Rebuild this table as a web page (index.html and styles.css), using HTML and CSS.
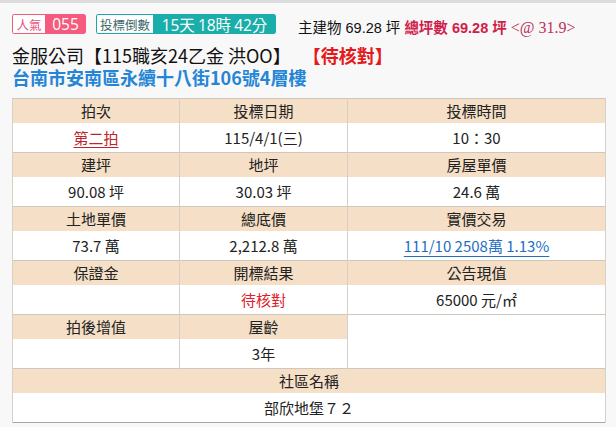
FILE: index.html
```html
<!DOCTYPE html>
<html lang="zh-Hant">
<head>
<meta charset="utf-8">
<link rel="stylesheet" href="styles.css">
</head>
<body>
<div class="topbar"></div>
<div class="page">
  <div class="statline">
    <span class="badge pop"><span class="b-label">人氣</span><span class="b-val">055</span></span>
    <span class="badge cd"><span class="b-label">投標倒數</span><span class="b-val">15天 18時 42分</span></span>
    <span class="area">主建物 69.28 坪 <b class="hl">總坪數 <span class="num">69.28</span> 坪</b> <span class="at">&lt;@ 31.9&gt;</span></span>
  </div>
  <div class="title">金服公司【115職亥24乙金 洪OO】 <span class="status">【待核對】</span></div>
  <div class="addr">台南市安南區永續十八街106號4層樓</div>
  <table class="info">
    <colgroup><col class="c1"><col class="c2"><col class="c3"></colgroup>
    <tr class="hd"><td>拍次</td><td>投標日期</td><td>投標時間</td></tr>
    <tr class="vl"><td><a class="red-link">第二拍</a></td><td>115/4/1(三)</td><td>10：30</td></tr>
    <tr class="hd"><td>建坪</td><td>地坪</td><td>房屋單價</td></tr>
    <tr class="vl"><td>90.08 坪</td><td>30.03 坪</td><td>24.6 萬</td></tr>
    <tr class="hd"><td>土地單價</td><td>總底價</td><td>實價交易</td></tr>
    <tr class="vl"><td>73.7 萬</td><td>2,212.8 萬</td><td><a class="blue-link">111/10 2508萬 1.13%</a></td></tr>
    <tr class="hd"><td>保證金</td><td>開標結果</td><td>公告現值</td></tr>
    <tr class="vl"><td></td><td class="red">待核對</td><td>65000 元/㎡</td></tr>
    <tr class="hd"><td>拍後增值</td><td>屋齡</td><td class="blank" rowspan="2"></td></tr>
    <tr class="vl"><td></td><td>3年</td></tr>
    <tr class="hd"><td colspan="3">社區名稱</td></tr>
    <tr class="vl last"><td colspan="3">部欣地堡７２</td></tr>
  </table>
</div>
</body>
</html>
```
FILE: styles.css
```css
html, body {
  margin: 0;
  padding: 0;
  background: #f8f8f8;
}
body {
  font-family: "Noto Sans CJK TC", "Noto Sans", sans-serif;
  color: #222;
}
.topbar {
  height: 3px;
  background: #dcdcdc;
}
.page {
  padding: 11px 11px 0 12px;
}
.statline {
  display: flex;
  align-items: center;
  height: 20px;
  white-space: nowrap;
}
.badge {
  display: inline-flex;
  height: 20px;
  box-sizing: border-box;
  border-radius: 2px;
  overflow: hidden;
}
.b-label {
  display: flex;
  align-items: center;
  justify-content: center;
  background: #fff;
  box-sizing: border-box;
  font-size: 12.5px;
  border-radius: 2px 0 0 2px;
}
.b-val {
  display: flex;
  align-items: center;
  justify-content: center;
  color: #fff;
}
.pop .b-label {
  width: 33px;
  border: 1px solid #f05c7e;
  border-right: none;
  color: #e8547a;
}
.pop .b-val {
  width: 41px;
  background: #f45b7c;
  font-family: "Open Sans", "Noto Sans", sans-serif;
  font-size: 15.5px;
  border-radius: 0 2px 2px 0;
}
.cd {
  margin-left: 10px;
}
.cd .b-label {
  width: 57px;
  border: 1px solid #1aa9a8;
  border-right: none;
  color: #3a6a6c;
  font-size: 12.5px;
}
.cd .b-val {
  width: 123px;
  background: #1aaeab;
  font-size: 15.5px;
  font-family: "Open Sans", "Noto Sans CJK TC", sans-serif;
  border-radius: 0 2px 2px 0;
  word-spacing: -1px;
}
.area {
  margin-left: 22px;
  font-size: 14.5px;
  font-family: "Liberation Sans", "Noto Sans CJK TC", sans-serif;
  color: #111;
  position: relative;
  top: 2px;
}
.hl {
  color: #d0204a;
  font-weight: bold;
}
.at {
  color: #c0305a;
  font-family: "Liberation Serif", serif;
  font-size: 16px;
}
.title {
  margin-top: 10px;
  font-size: 18px;
  line-height: 22px;
  color: #111;
  white-space: nowrap;
}
.status {
  color: #e3191b;
  font-weight: bold;
  margin-left: 8px;
}
.addr {
  font-size: 18px;
  line-height: 22px;
  font-weight: bold;
  color: #2585d6;
  white-space: nowrap;
}
.info {
  margin-top: 10px;
  width: 593px;
  border-collapse: collapse;
  table-layout: fixed;
  background: #fff;
  border: 1px solid #a8a8a8;
  font-size: 15px;
  color: #222;
}
.c1 { width: 167px; }
.c2 { width: 168px; }
.c3 { width: 258px; }
.info td {
  text-align: center;
  padding: 0;
  border-left: 1px solid #d6d0c8;
  border-right: 1px solid #d6d0c8;
}
.hd td {
  background: #f5dfc7;
  height: 24px;
  line-height: 24px;
  border-top: 1px solid #cfc7bd;
}
.hd td.blank {
  background: #fff;
}
.vl td {
  height: 29px;
  line-height: 29px;
  background: #fff;
}
.red-link {
  color: #c0242a;
  text-decoration: underline;
  text-underline-offset: 3px;
}
.blue-link {
  color: #1f6fc4;
  text-decoration: underline;
  text-underline-offset: 4px;
}
.red {
  color: #e0202a;
}
```
